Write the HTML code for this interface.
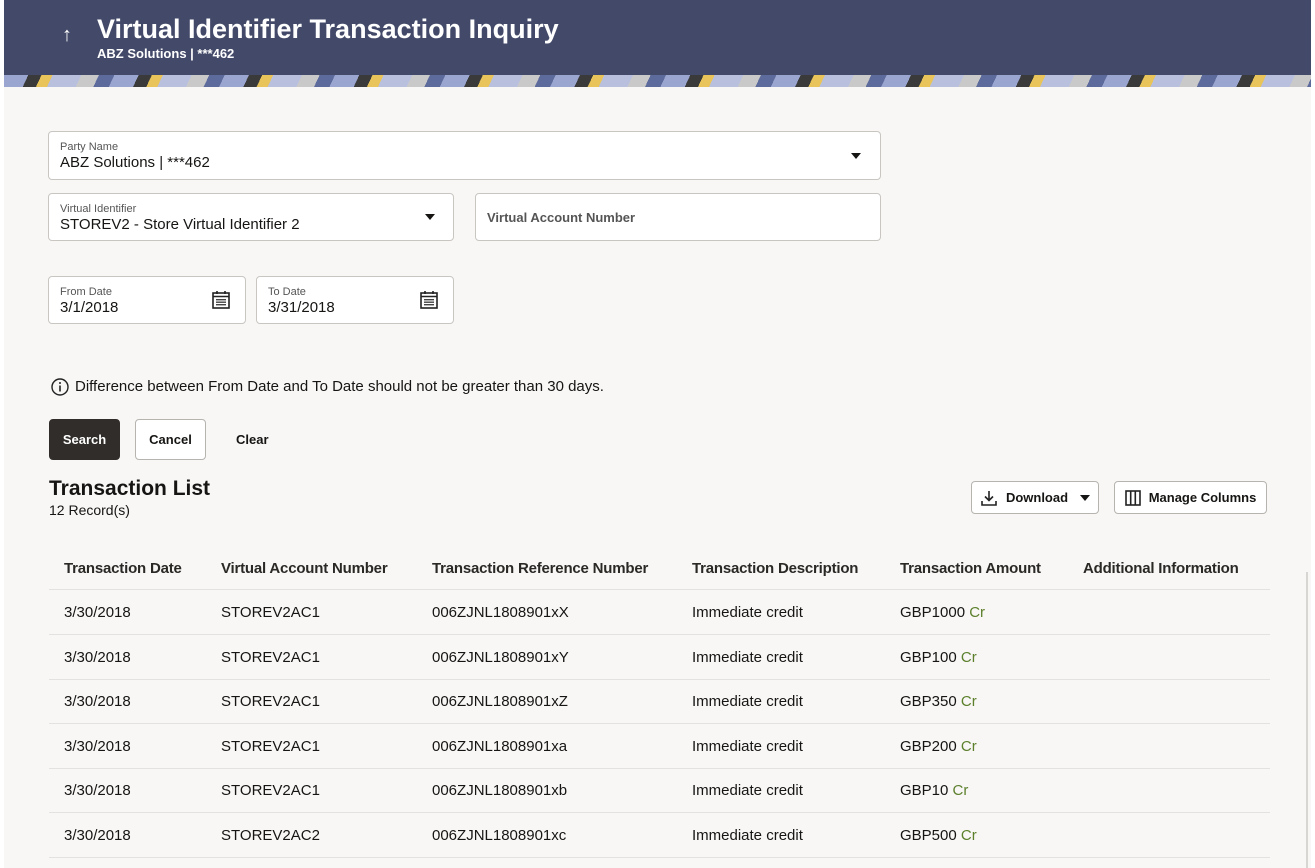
<!DOCTYPE html>
<html><head><meta charset="utf-8"><style>
*{margin:0;padding:0;box-sizing:border-box}
body{width:1315px;height:868px;overflow:hidden;background:#fff;font-family:"Liberation Sans",sans-serif;color:#161513;position:relative}
.main{position:absolute;left:4px;top:0;width:1307px;height:868px;background:#f8f7f5}
.hdr{position:absolute;left:4px;top:0;width:1307px;height:76px;background:#434a69}
.band{position:absolute;left:4px;top:75px;width:1307px;height:12px;background:repeating-linear-gradient(115deg,#9aa6cf 0 22px,#3a3a3a 22px 34px,#e8c45a 34px 44px,#b8c0de 44px 70px,#c9c9c9 70px 86px,#5d6a9c 86px 100px)}
.a{position:absolute;white-space:nowrap}
.box{position:absolute;border:1px solid #c9c6c2;border-radius:4px;background:#fff}
.lbl{position:absolute;left:11px;top:9px;font-size:11px;color:#555}
.val{position:absolute;left:11px;top:22px;font-size:15px}
.caret{position:absolute;width:0;height:0;border-left:5px solid transparent;border-right:5px solid transparent;border-top:6px solid #161513}
.btn{position:absolute;border:1px solid #b7b4b0;border-radius:4px;background:#fff;font-size:13px;font-weight:bold;display:flex;align-items:center;justify-content:center}
.th{position:absolute;top:560px;font-size:15px;font-weight:bold;color:#2a2926;letter-spacing:-0.2px}
.line{position:absolute;left:49px;width:1221px;height:1px;background:#e4e2df}
.td{position:absolute;font-size:15px}
.cr{color:#5b7f2b}
</style></head><body>
<div class="main"></div>
<div class="hdr"></div>
<div class="band"></div>
<div class="a" style="left:62px;top:24px;color:#fff;font-size:20px">↑</div>
<div class="a" style="left:97px;top:14px;color:#fff;font-size:27px;font-weight:bold">Virtual Identifier Transaction Inquiry</div>
<div class="a" style="left:97px;top:46px;color:#fff;font-size:13px;font-weight:bold">ABZ Solutions | ***462</div>

<div class="box" style="left:48px;top:131px;width:833px;height:49px"><div class="lbl">Party Name</div><div class="val">ABZ Solutions | ***462</div><div class="caret" style="left:802px;top:21px"></div></div>
<div class="box" style="left:48px;top:193px;width:406px;height:48px"><div class="lbl">Virtual Identifier</div><div class="val">STOREV2 - Store Virtual Identifier 2</div><div class="caret" style="left:376px;top:20px"></div></div>
<div class="box" style="left:475px;top:193px;width:406px;height:48px"><div class="a" style="left:11px;top:16px;font-size:13px;font-weight:bold;color:#555">Virtual Account Number</div></div>

<div class="box" style="left:48px;top:276px;width:198px;height:48px"><div class="lbl">From Date</div><div class="val">3/1/2018</div>
<svg class="a" style="left:162px;top:13px" width="20" height="20" viewBox="0 0 20 20"><rect x="2" y="3" width="16" height="15" fill="none" stroke="#222" stroke-width="1.6"/><line x1="2" y1="6.5" x2="18" y2="6.5" stroke="#222" stroke-width="1.5"/><line x1="6" y1="1" x2="6" y2="4" stroke="#222" stroke-width="1.6"/><line x1="14" y1="1" x2="14" y2="4" stroke="#222" stroke-width="1.6"/><g fill="#444"><rect x="5" y="9" width="10" height="1.4"/><rect x="5" y="11.5" width="10" height="1.4"/><rect x="5" y="14" width="10" height="1.4"/></g></svg></div>
<div class="box" style="left:256px;top:276px;width:198px;height:48px"><div class="lbl">To Date</div><div class="val">3/31/2018</div>
<svg class="a" style="left:162px;top:13px" width="20" height="20" viewBox="0 0 20 20"><rect x="2" y="3" width="16" height="15" fill="none" stroke="#222" stroke-width="1.6"/><line x1="2" y1="6.5" x2="18" y2="6.5" stroke="#222" stroke-width="1.5"/><line x1="6" y1="1" x2="6" y2="4" stroke="#222" stroke-width="1.6"/><line x1="14" y1="1" x2="14" y2="4" stroke="#222" stroke-width="1.6"/><g fill="#444"><rect x="5" y="9" width="10" height="1.4"/><rect x="5" y="11.5" width="10" height="1.4"/><rect x="5" y="14" width="10" height="1.4"/></g></svg></div>

<svg class="a" style="left:50px;top:377px" width="20" height="20" viewBox="0 0 20 20"><circle cx="10" cy="10" r="8" fill="none" stroke="#222" stroke-width="1.4"/><line x1="10" y1="8.5" x2="10" y2="14.5" stroke="#222" stroke-width="1.6"/><circle cx="10" cy="6" r="1" fill="#222"/></svg>
<div class="a" style="left:75px;top:378px;font-size:15px">Difference between From Date and To Date should not be greater than 30 days.</div>

<div class="btn" style="left:49px;top:419px;width:71px;height:41px;background:#312d2a;color:#fff;border-color:#312d2a">Search</div>
<div class="btn" style="left:135px;top:419px;width:71px;height:41px">Cancel</div>
<div class="a" style="left:236px;top:432px;font-size:13px;font-weight:bold">Clear</div>

<div class="a" style="left:49px;top:477px;font-size:21px;font-weight:bold">Transaction List</div>
<div class="a" style="left:49px;top:502px;font-size:14px">12 Record(s)</div>

<div class="btn" style="left:971px;top:481px;width:128px;height:33px">
<svg style="margin-right:8px" width="18" height="18" viewBox="0 0 18 18"><path d="M9 2v9M5 7.5l4 4 4-4M2 12v4h14v-4" fill="none" stroke="#222" stroke-width="1.6"/></svg>Download<span class="caret" style="position:relative;display:inline-block;margin-left:12px"></span></div>
<div class="btn" style="left:1114px;top:481px;width:153px;height:33px">
<svg style="margin-right:8px" width="16" height="16" viewBox="0 0 16 16"><rect x="1" y="1" width="14" height="14" fill="none" stroke="#222" stroke-width="1.6"/><line x1="5.7" y1="1" x2="5.7" y2="15" stroke="#222" stroke-width="1.6"/><line x1="10.3" y1="1" x2="10.3" y2="15" stroke="#222" stroke-width="1.6"/></svg>Manage Columns</div>

<div class="th" style="left:64px">Transaction Date</div>
<div class="th" style="left:221px">Virtual Account Number</div>
<div class="th" style="left:432px">Transaction Reference Number</div>
<div class="th" style="left:692px">Transaction Description</div>
<div class="th" style="left:900px">Transaction Amount</div>
<div class="th" style="left:1083px">Additional Information</div>

<div class="line" style="top:589px"></div>
<div class="td" style="left:64px;top:604px">3/30/2018</div><div class="td" style="left:221px;top:604px">STOREV2AC1</div><div class="td" style="left:432px;top:604px">006ZJNL1808901xX</div><div class="td" style="left:692px;top:604px">Immediate credit</div><div class="td" style="left:900px;top:604px">GBP1000 <span class="cr">Cr</span></div>
<div class="line" style="top:634px"></div>
<div class="td" style="left:64px;top:649px">3/30/2018</div><div class="td" style="left:221px;top:649px">STOREV2AC1</div><div class="td" style="left:432px;top:649px">006ZJNL1808901xY</div><div class="td" style="left:692px;top:649px">Immediate credit</div><div class="td" style="left:900px;top:649px">GBP100 <span class="cr">Cr</span></div>
<div class="line" style="top:679px"></div>
<div class="td" style="left:64px;top:693px">3/30/2018</div><div class="td" style="left:221px;top:693px">STOREV2AC1</div><div class="td" style="left:432px;top:693px">006ZJNL1808901xZ</div><div class="td" style="left:692px;top:693px">Immediate credit</div><div class="td" style="left:900px;top:693px">GBP350 <span class="cr">Cr</span></div>
<div class="line" style="top:723px"></div>
<div class="td" style="left:64px;top:738px">3/30/2018</div><div class="td" style="left:221px;top:738px">STOREV2AC1</div><div class="td" style="left:432px;top:738px">006ZJNL1808901xa</div><div class="td" style="left:692px;top:738px">Immediate credit</div><div class="td" style="left:900px;top:738px">GBP200 <span class="cr">Cr</span></div>
<div class="line" style="top:768px"></div>
<div class="td" style="left:64px;top:782px">3/30/2018</div><div class="td" style="left:221px;top:782px">STOREV2AC1</div><div class="td" style="left:432px;top:782px">006ZJNL1808901xb</div><div class="td" style="left:692px;top:782px">Immediate credit</div><div class="td" style="left:900px;top:782px">GBP10 <span class="cr">Cr</span></div>
<div class="line" style="top:812px"></div>
<div class="td" style="left:64px;top:827px">3/30/2018</div><div class="td" style="left:221px;top:827px">STOREV2AC2</div><div class="td" style="left:432px;top:827px">006ZJNL1808901xc</div><div class="td" style="left:692px;top:827px">Immediate credit</div><div class="td" style="left:900px;top:827px">GBP500 <span class="cr">Cr</span></div>
<div class="line" style="top:857px"></div>
<div class="a" style="left:1306px;top:572px;width:2px;height:296px;background:#d8d6d3"></div>
</body></html>
